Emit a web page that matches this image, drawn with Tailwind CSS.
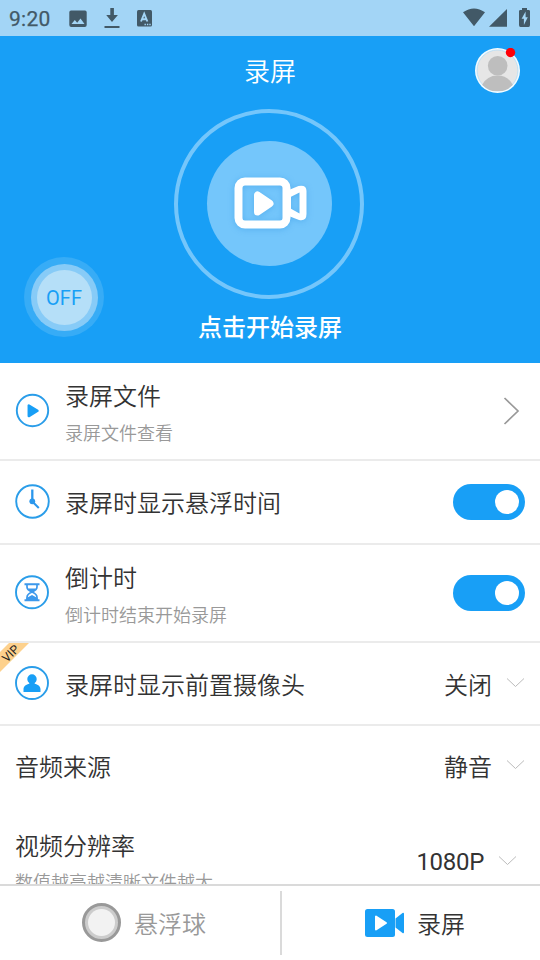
<!DOCTYPE html>
<html lang="zh-CN">
<head>
<meta charset="utf-8">
<title>录屏</title>
<script src="https://cdn.jsdelivr.net/npm/@tailwindcss/browser@4"></script>
</head>
<body class="w-[540px] h-[960px] overflow-hidden bg-white text-[#333333] font-['Roboto','Noto_Sans_CJK_SC',sans-serif] flex flex-col">
<header class="h-9 shrink-0 bg-[#a3d5f6] flex items-center pl-[9px] pr-[9px] text-[#425967]">
  <span class="text-[21px] leading-[35px] pt-[2px] tracking-[0.3px] w-[60px] [-webkit-text-stroke:0.25px_#425967]">9:20</span>
  <svg class="w-[18px] h-[18px] mt-px" viewBox="0 0 18 18"><path fill="currentColor" fill-rule="evenodd" d="M2 .5h14A1.7 1.7 0 0 1 17.700 2v13a2 2 0 0 1-2 2H2.300a2 2 0 0 1-2-2V2.300A1.800 1.800 0 0 1 2 .5zM2.500 14h13L11.500 8.500l-3.300 4.300-2.400-2.700z"/></svg>
  <svg class="w-4 h-5 ml-[17px]" viewBox="0 0 16 20"><path fill="currentColor" d="M6.300 0h3.600v7h4L8 14 2.200 7h4.100zM.5 18h15v2H.5z"/></svg>
  <svg class="w-[15px] h-[17px] ml-[17px]" viewBox="0 0 15 17"><rect width="15" height="16.500" rx="1.500" fill="currentColor"/><path d="M4 11.500 7.200 3.700l3.200 7.800M5.200 9.200h4" fill="none" stroke="#a3d5f6" stroke-width="1.900"/><path d="M7.500 14.500h1.400m1 0h1.400m1 0h1.400" stroke="#a3d5f6" stroke-width="1.300"/></svg>
  <svg class="w-[68px] h-5 ml-auto" viewBox="0 0 68 20"><path fill="currentColor" d="M0 4.300Q11 -3.500 22 4.300L11 18.300zM26 18.700 44 1v17.700zM56 3.200Q56 2 57.500 2H59V-.5h5V2h1.500Q67 2 67 3.200V17q0 2-1.500 2h-8Q56 19 56 17z"/><path fill="#a3d5f6" d="m62.600 3.500-4 7.200h2.300v6.200l3.900-7.700h-2.200z"/></svg>
</header>

<section class="h-[327px] shrink-0 bg-[#189ff6] relative flex flex-col items-center text-white">
  <h1 class="text-[26px] leading-[38px] mt-[17px] font-[350]">录屏</h1>
  <div class="absolute left-[475px] top-3 w-[45px] h-[45px]">
    <svg class="w-full h-full" viewBox="0 0 45 45"><defs><clipPath id="face"><circle cx="22.500" cy="22.500" r="21"/></clipPath></defs><circle cx="22.500" cy="22.500" r="22.500" fill="#f2fbff"/><circle cx="22.500" cy="22.500" r="20.500" fill="#e6e6e6" stroke="#a9d7f5" stroke-width=".7"/><g fill="#bebebe" clip-path="url(#face)"><circle cx="22.700" cy="17.700" r="9.800"/><path d="M7 43V37Q12 27.500 22.500 27.500T38 37v6z"/></g><circle cx="35.500" cy="4.500" r="4.700" fill="#ff0008"/></svg>
  </div>
  <div class="mt-[18px] mr-[2px] w-[190px] h-[190px] shrink-0 rounded-full border-4 border-[#74c6fb] flex items-center justify-center">
    <div class="w-[125px] h-[125px] mb-[2px] rounded-full bg-[#74c6fb] flex items-center justify-center">
      <svg class="w-[84px] h-[64px] ml-[3px] overflow-visible drop-shadow-[0_1px_3px_rgba(24,130,220,0.3)]" viewBox="0 0 84 64"><rect x="9.500" y="10.500" width="48" height="43" rx="6.500" fill="none" stroke="#fff" stroke-width="8"/><path fill="#fff" fill-rule="evenodd" d="M61 18.500 69.500 15Q77.500 13.500 77.500 20V43Q77.500 50.500 70 49L61 45.500zM62 25.800v12l8.500 4.700V21.500z"/><path d="M28.500 24v17l12.500-8.500z" fill="#fff" stroke="#fff" stroke-width="7" stroke-linejoin="round"/></svg>
    </div>
  </div>
  <p class="mt-[11px] text-2xl leading-9 font-medium">点击开始录屏</p>
  <div class="absolute left-6 top-[221px] size-20 rounded-full bg-[#37acf6] flex items-center justify-center">
    <div class="size-[67px] rounded-full bg-[#87cbf7] flex items-center justify-center">
      <div class="size-[55px] rounded-full bg-[#b5dff8] text-[#189ff6] text-xl pt-px flex items-center justify-center">OFF</div>
    </div>
  </div>
</section>

<main class="h-[521px] shrink-0 overflow-hidden text-2xl font-[350]">
  <div class="h-[98px] border-b-2 border-[#ebebeb] flex items-center pl-[15px] pr-5 pb-px">
    <svg class="w-[35px] h-[35px] mr-[15px]" viewBox="0 0 35 35"><circle cx="17.500" cy="17.500" r="15.700" fill="none" stroke="#2a9de9" stroke-width="1.900"/><path d="M13.800 12.500v10.600l8.700-5.300z" fill="#189ff6" stroke="#189ff6" stroke-width="2.500" stroke-linejoin="round"/></svg>
    <div class="flex-1 pt-1"><div class="leading-9">录屏文件</div><div class="text-lg leading-[27px] mt-[5px] text-[#999999]">录屏文件查看</div></div>
    <svg class="w-[17px] h-7" viewBox="0 0 17 28"><path d="M1.500 1 15 14 1.500 27" fill="none" stroke="#999" stroke-width="1.700"/></svg>
  </div>
  <div class="h-[84px] border-b-2 border-[#ebebeb] flex items-center pl-[15px] pr-[15px]">
    <svg class="w-[35px] h-[35px] mr-[15px] mb-px" viewBox="0 0 35 35"><circle cx="17.500" cy="17.500" r="16.300" fill="none" stroke="#2a9de9" stroke-width="1.900"/><g stroke="#2a97ec" fill="none"><path d="M17.300 5.500v12" stroke-width="2.300"/><path d="m17.300 17.500 6.500 6.500" stroke-width="2"/></g><circle cx="17.300" cy="17.300" r="2.900" fill="#2a97ec"/></svg>
    <div class="flex-1 pt-[3px]">录屏时显示悬浮时间</div>
    <div class="w-[72px] h-9 rounded-full bg-[#189ff6] p-[6px] flex justify-end items-center"><span class="size-6 rounded-full bg-white"></span></div>
  </div>
  <div class="h-[98px] border-b-2 border-[#ebebeb] flex items-center pl-[15px] pr-[15px]">
    <svg class="w-[35px] h-[35px] mr-[15px] mb-[2px]" viewBox="0 0 35 35"><circle cx="17" cy="17.300" r="16" fill="none" stroke="#2a9de9" stroke-width="1.900"/><g stroke="#3b98ec" fill="none" stroke-width="1.900"><path d="M9.500 9.200h15M9.500 25.300h15"/><path d="M12 9v3q0 3 5 5 5-2 5-5V9M12 25v-2.500q0-3.500 5-5.500 5 2 5 5.500V25" stroke-width="1.700"/></g><path d="M13 13.500h8L18 17.500h-2zM11.500 26v-3l5.500-3 5.500 3v3z" fill="#3b98ec"/></svg>
    <div class="flex-1 pt-[3px]"><div class="leading-9">倒计时</div><div class="text-lg leading-[27px] mt-[5px] text-[#999999]">倒计时结束开始录屏</div></div>
    <div class="w-[72px] h-9 rounded-full bg-[#189ff6] p-[6px] flex justify-end items-center"><span class="size-6 rounded-full bg-white"></span></div>
  </div>
  <div class="relative h-[83px] border-b-2 border-[#ebebeb] flex items-center pl-[15px] pr-[15px]">
    <svg class="absolute left-0 top-0 w-[30px] h-[30px]" viewBox="0 0 30 30"><path d="M9 0h20L0 29V9z" fill="#fdd18d"/><text x="11" y="14.500" transform="rotate(-45 11 11)" text-anchor="middle" font-size="12" font-weight="400" fill="#222">VIP</text></svg>
    <svg class="w-[35px] h-[35px] mr-[15px]" viewBox="0 0 35 35"><circle cx="17" cy="17" r="16" fill="none" stroke="#2a9de9" stroke-width="1.900"/><path fill="#189ff6" d="M12.300 13a4.700 4.700 0 1 1 9.400 0c0 2-1 3.300-2 4v.8c3 .6 5.800 2.300 5.800 5.500V26h-17v-2.700c0-3.200 2.800-4.900 5.800-5.500V17c-1-.7-2-2-2-4z"/></svg>
    <div class="flex-1 pt-1">录屏时显示前置摄像头</div>
    <span class="pt-1">关闭</span>
    <svg class="w-[18px] h-[10px] ml-[15px] mb-[2px]" viewBox="0 0 18 10"><path d="m0 .5 8.500 8 8.500-8" fill="none" stroke="#bbb" stroke-width="1"/></svg>
  </div>
  <div class="h-[82px] flex items-center pl-[15px] pr-[15px]">
    <div class="flex-1 pt-[2px]">音频来源</div>
    <span class="pt-[2px]">静音</span>
    <svg class="w-[18px] h-[10px] ml-[15px] mb-1" viewBox="0 0 18 10"><path d="m0 .5 8.500 8 8.500-8" fill="none" stroke="#bbb" stroke-width="1"/></svg>
  </div>
  <div class="h-[104px] flex items-center pl-[15px] pr-[23px]">
    <div class="flex-1 pt-[5px]"><div class="leading-9">视频分辨率</div><div class="text-lg leading-[27px] mt-1 text-[#999999]">数值越高越清晰文件越大</div></div>
    <span class="pt-[3px] font-normal text-[24px] tracking-[-0.3px]">1080P</span>
    <svg class="w-[18px] h-[10px] ml-[15px] mt-[2px]" viewBox="0 0 18 10"><path d="m0 .5 8.500 8 8.500-8" fill="none" stroke="#bbb" stroke-width="1"/></svg>
  </div>
</main>

<nav class="h-[76px] shrink-0 border-t-2 border-[#dadada] bg-white flex text-2xl pt-[5px] pb-[5px] font-[350]">
  <div class="w-[280px] flex items-center pl-[82px] text-[#999999]">
    <div class="size-[39px] rounded-full border-[3px] border-[#999999] bg-[#cccccc] p-[3px] mr-[13px] mb-px"><div class="size-full rounded-full bg-[#f2f2f2]"></div></div>
    <span class="pt-[3px]">悬浮球</span>
  </div>
  <div class="w-[2px] bg-[#dadada]"></div>
  <div class="flex-1 flex items-center pl-[83px]">
    <svg class="w-[39px] h-7 mr-[13px]" viewBox="0 0 39 28"><rect width="30" height="28" rx="2.500" fill="#189ff6"/><path d="M30.500 9.500 37.500 4q1.500-.7 1.500 1v18q0 1.700-1.500 1L30.500 18.500z" fill="#189ff6"/><path d="M11 7.500v13L21 14z" fill="#fff" stroke="#fff" stroke-width="2" stroke-linejoin="round"/></svg>
    <span class="pt-[3px]">录屏</span>
  </div>
</nav>
</body>
</html>
